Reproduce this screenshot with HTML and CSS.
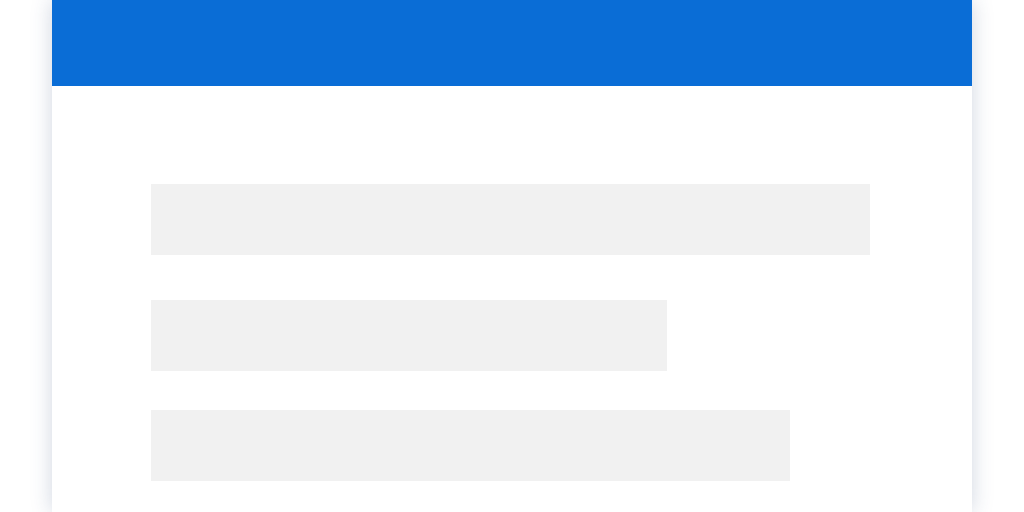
FILE: index.html
```html
<!DOCTYPE html>
<html>
<head>
<meta charset="utf-8">
<link rel="stylesheet" href="styles.css">
</head>
<body>
<div class="card">
  <div class="card-header"></div>
  <div class="card-body">
    <div class="bar bar-1"></div>
    <div class="bar bar-2"></div>
    <div class="bar bar-3"></div>
  </div>
</div>
</body>
</html>
```
FILE: styles.css
```css
html, body {
  margin: 0;
  padding: 0;
  background: #ffffff;
  height: 512px;
  overflow: hidden;
  font-family: "Liberation Sans", Arial, sans-serif;
}
.card {
  margin: 0 52px;
  width: 920px;
  height: 512px;
  background: #ffffff;
  box-shadow: 0 0 20px rgba(40, 70, 120, 0.22);
}
.card-header {
  height: 86px;
  background: #0a6dd6;
}
.card-body {
  padding: 98px 102px 0 99px;
  display: flex;
  flex-direction: column;
}
.bar {
  height: 71px;
  background: #f1f1f1;
}
.bar-1 { width: 719px; }
.bar-2 { width: 516px; margin-top: 45px; }
.bar-3 { width: 639px; margin-top: 39px; }
```
